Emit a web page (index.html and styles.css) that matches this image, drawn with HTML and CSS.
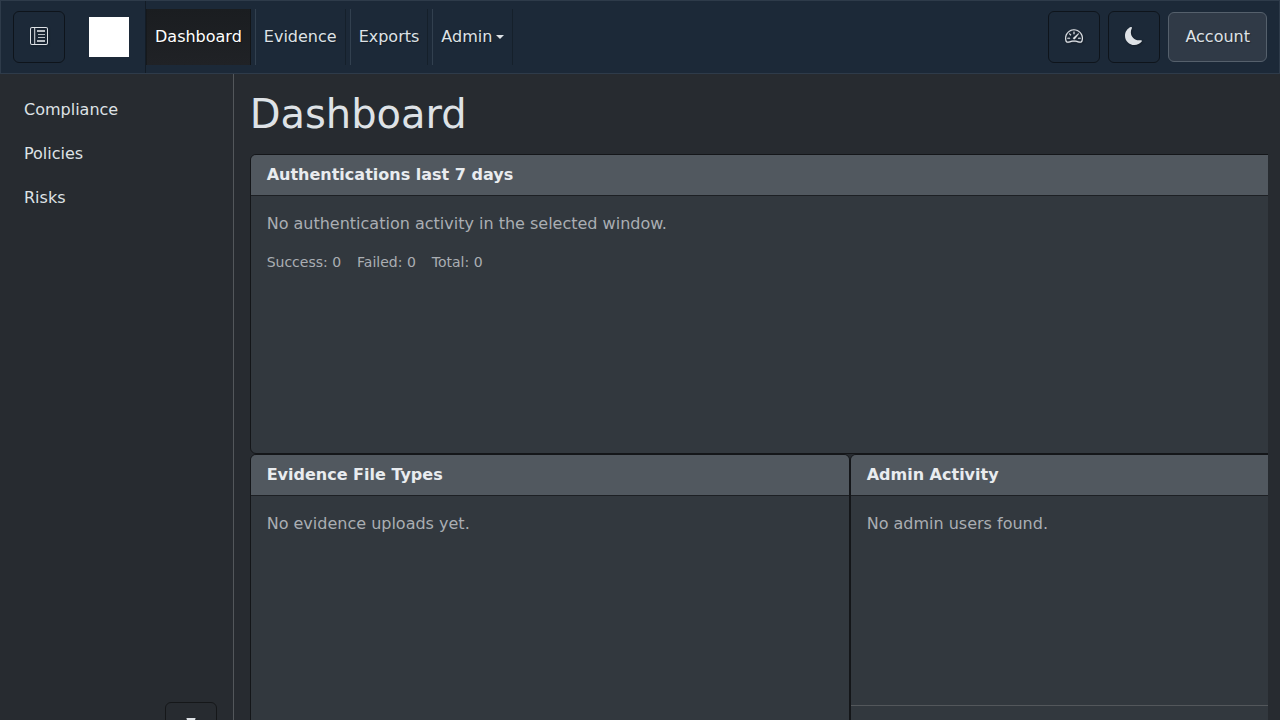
FILE: index.html
```html
<!DOCTYPE html>
<html lang="en">
<head>
<meta charset="utf-8">
<title>Dashboard</title>
<link rel="stylesheet" href="styles.css">
</head>
<body>
<header class="navbar">
  <button class="icon-btn" aria-label="Toggle sidebar"><svg class="icon" viewBox="0 0 18 18"><path fill-rule="evenodd" d="M2 0h14a2 2 0 0 1 2 2v14a2 2 0 0 1-2 2H2a2 2 0 0 1-2-2V2a2 2 0 0 1 2-2zM2 1a1 1 0 0 0-1 1v14a1 1 0 0 0 1 1h2.2V1zM5.2 1v16H16a1 1 0 0 0 1-1V2a1 1 0 0 0-1-1z"/><path fill-opacity=".8" d="M7 3h8v2H7zM8 7h7v1H8zM8 10h7v1H8zM7 13h8v2H7z"/></svg></button>
  <a class="brand" aria-label="Home"><span class="logo"></span></a>
  <nav class="nav">
    <a class="nav-link active">Dashboard</a>
    <a class="nav-link">Evidence</a>
    <a class="nav-link">Exports</a>
    <a class="nav-link">Admin<span class="caret"></span></a>
  </nav>
  <div class="actions">
    <button class="icon-btn" aria-label="Performance"><svg class="icon gauge" viewBox="0 0 16 16"><path d="M8 4a.5.5 0 0 1 .5.5V6a.5.5 0 0 1-1 0V4.5A.5.5 0 0 1 8 4M3.732 5.732a.5.5 0 0 1 .707 0l.915.914a.5.5 0 1 1-.708.708l-.914-.915a.5.5 0 0 1 0-.707M2 10a.5.5 0 0 1 .5-.5h1.586a.5.5 0 0 1 0 1H2.5A.5.5 0 0 1 2 10m9.5 0a.5.5 0 0 1 .5-.5h1.5a.5.5 0 0 1 0 1H12a.5.5 0 0 1-.5-.5m.754-4.246a.39.39 0 0 0-.527-.02L7.547 9.31a.91.91 0 1 0 1.302 1.258l3.434-4.297a.39.39 0 0 0-.029-.518z"/><path fill-rule="evenodd" d="M0 10a8 8 0 1 1 15.547 2.661c-.442 1.253-1.845 1.602-2.932 1.25C11.309 13.488 9.475 13 8 13c-1.474 0-3.31.488-4.615.911-1.087.352-2.49.003-2.932-1.25A8 8 0 0 1 0 10m8-7a7 7 0 0 0-6.603 9.329c.203.575.923.876 1.68.63C4.397 12.533 6.358 12 8 12s3.604.532 4.923.96c.757.245 1.477-.056 1.68-.631A7 7 0 0 0 8 3"/></svg></button>
    <button class="icon-btn" aria-label="Dark mode"><svg class="icon" viewBox="0 0 16 16"><path d="M6 .278a.77.77 0 0 1 .08.858 7.2 7.2 0 0 0-.878 3.46c0 4.021 3.278 7.277 7.318 7.277q.792-.001 1.533-.16a.79.79 0 0 1 .81.316.73.73 0 0 1-.031.893A8.35 8.35 0 0 1 8.344 16C3.734 16 0 12.286 0 7.71 0 4.266 2.114 1.312 5.124.06A.75.75 0 0 1 6 .278"/></svg></button>
    <button class="account">Account</button>
  </div>
</header>
<div class="shell">
  <aside class="sidebar">
    <a class="side-link">Compliance</a>
    <a class="side-link">Policies</a>
    <a class="side-link">Risks</a>
    <button class="icon-btn pin" aria-label="Pin sidebar"><svg class="icon" viewBox="0 0 16 16"><path d="M4 0h8v.5c0 .68-.342 1.174-.646 1.479-.126.125-.25.224-.354.298v4.431l.078.048c.203.127.476.314.751.555C12.36 7.775 13 8.527 13 9.5a.5.5 0 0 1-.5.5h-4v4.5c0 .276-.224 1.5-.5 1.5s-.5-1.224-.5-1.5V10h-4a.5.5 0 0 1-.5-.5c0-.973.64-1.725 1.17-2.189A6 6 0 0 1 5 6.708V2.277a3 3 0 0 1-.354-.298C4.342 1.674 4 1.179 4 .5z"/></svg></button>
  </aside>
  <main class="main">
    <h1 class="title">Dashboard</h1>
    <div class="grid">
      <section class="card wide">
        <h2 class="card-header">Authentications last 7 days</h2>
        <div class="card-body">
          <p class="empty">No authentication activity in the selected window.</p>
          <div class="stats"><span>Success: 0</span><span>Failed: 0</span><span>Total: 0</span></div>
        </div>
      </section>
      <section class="card">
        <h2 class="card-header">Evidence File Types</h2>
        <div class="card-body"><p class="empty">No evidence uploads yet.</p></div>
      </section>
      <section class="card">
        <h2 class="card-header">Admin Activity</h2>
        <div class="card-body"><p class="empty">No admin users found.</p></div>
        <div class="card-footer"></div>
      </section>
    </div>
  </main>
</div>
</body>
</html>
```
FILE: styles.css
```css
* { box-sizing: border-box; }
body {
  margin: 0;
  height: 720px;
  overflow: hidden;
  display: flex;
  flex-direction: column;
  background: #272b30;
  color: #dee2e6;
  font: 16px/24px "DejaVu Sans", sans-serif;
}
.navbar {
  flex: none;
  height: 74px;
  display: flex;
  align-items: center;
  padding: 0 12px;
  background: #1c2938;
  border: 1px solid #2e3b4a;
  text-shadow: 1px 1px 1px rgba(0, 0, 0, .3);
}
.icon-btn {
  width: 52px;
  height: 52px;
  padding: 0 0 2px;
  display: flex;
  align-items: center;
  justify-content: center;
  border: 1px solid #0e141b;
  border-radius: 6px;
  background: transparent;
  color: #dee2e6;
}
.icon {
  width: 18px;
  height: 18px;
  fill: currentColor;
  filter: drop-shadow(1px 1px 1px rgba(0, 0, 0, .3));
}
.gauge { stroke: currentColor; stroke-width: .15; }
.brand {
  align-self: stretch;
  display: flex;
  align-items: center;
  padding: 0 16px 0 24px;
  border-right: 1px solid #131c26;
}
.logo { width: 40px; height: 40px; background: #fff; }
.nav { display: flex; gap: 4px; }
.nav-link {
  height: 56px;
  padding: 16px 8px;
  display: flex;
  align-items: center;
  border-left: 1px solid #32404f;
  border-right: 1px solid #15202b;
}
.nav-link.active {
  color: #fff;
  background: linear-gradient(#1a1d20, #202226);
  border-left-color: #16191c;
  border-right-color: #121518;
}
.caret {
  margin-left: 4px;
  border: 4.8px solid transparent;
  border-top-color: currentColor;
  border-bottom: 0;
}
.actions { margin-left: auto; display: flex; align-items: center; gap: 8px; }
.account {
  height: 50px;
  padding: 0 16px;
  font: inherit;
  color: #dee2e6;
  text-shadow: 1px 1px 1px rgba(0, 0, 0, .3);
  background: #303a47;
  border: 1px solid #55606c;
  border-radius: 6px;
}
.shell { flex: 1; min-height: 0; display: flex; overflow: hidden; }
.sidebar {
  width: 234px;
  flex: none;
  height: 696px;
  display: flex;
  flex-direction: column;
  padding: 16px 16px;
  border-right: 1px solid #53575b;
}
.side-link { height: 44px; padding: 8px; }
.pin { flex: none; align-self: flex-end; margin-top: auto; border-color: #151719; }
.main { flex: 1; min-width: 0; margin-right: 12px; padding: 16px 0 0 15.66px; overflow: hidden; }
.title { margin: 0 0 16px; font-size: 40px; line-height: 48px; font-weight: 400; }
.grid { display: grid; grid-template-columns: 600px 600px; grid-auto-rows: 300px; }
.card {
  display: flex;
  flex-direction: column;
  border: 1px solid #141619;
  border-radius: 6px;
  background: #32383e;
  overflow: hidden;
}
.wide { grid-column: span 2; }
.card-header {
  margin: 0;
  height: 41px;
  padding: 8px 16px;
  font-size: 16px;
  line-height: 24px;
  color: #e9ecef;
  background: #51585f;
  border-bottom: 1px solid #1d2024;
}
.card-body { flex: 1; padding: 16px; color: #aaaeb3; }
.empty { margin: 0 0 16px; }
.stats { display: flex; gap: 16px; font-size: 14px; line-height: 21px; }
.card-footer { height: 48px; border-top: 1px solid #53575b; }
```
